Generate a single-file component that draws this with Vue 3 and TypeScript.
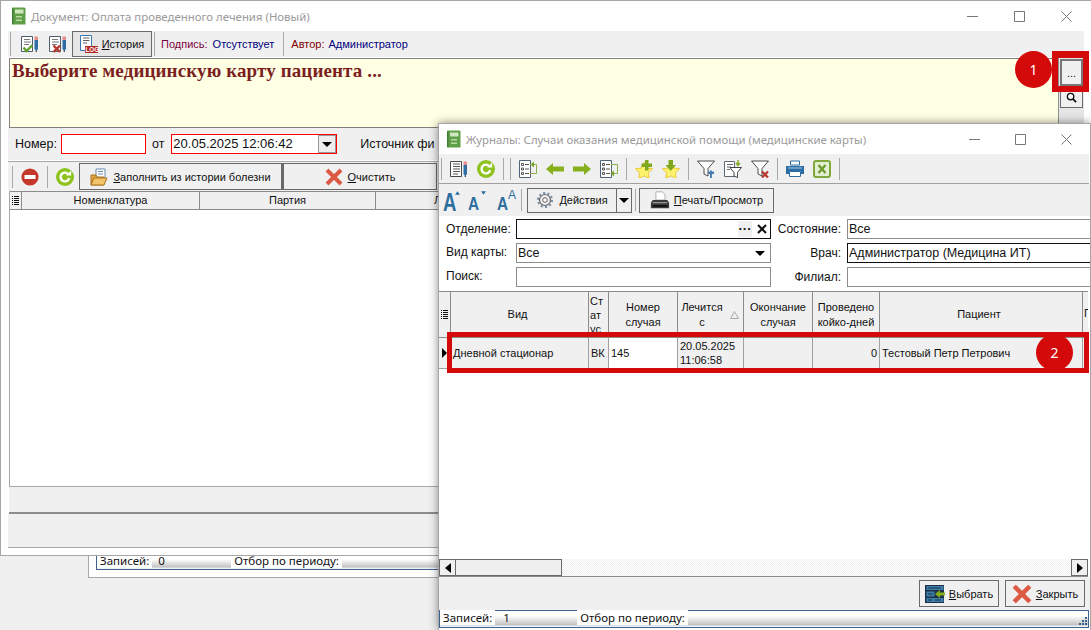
<template>
  <div class="desk">
    <!-- window lying behind the document, only its status bar shows -->
    <div class="back-win">
      <div class="status back-status">
        <span class="st-label">Записей:</span><span class="st-val st-v1">0</span>
        <span class="st-label">Отбор по периоду:</span>
      </div>
    </div>

    <!-- document window -->
    <section class="win doc-win">
      <header class="titlebar">
        <svg class="app-ico" viewBox="0 0 15 18" v-html="icons.app" />
        <span class="title">Документ: Оплата проведенного лечения (Новый)</span>
        <div class="controls">
          <svg viewBox="0 0 11 11"><path d="M0 5.5h11" /></svg>
          <svg viewBox="0 0 11 11"><path d="M.5.5h10v10H.5z" /></svg>
          <svg viewBox="0 0 11 11"><path d="M.5.5l10 10M10.5.5l-10 10" /></svg>
        </div>
      </header>

      <div class="tb1">
        <i class="sep" />
        <svg class="ico ml10" viewBox="0 0 18 18" v-html="icons.docOk" />
        <svg class="ico ml10" viewBox="0 0 18 18" v-html="icons.docNo" />
        <button class="btn hist"><svg class="ico" viewBox="0 0 18 18" v-html="icons.log" /><span><u>И</u>стория</span></button>
        <i class="sep" />
        <span class="info i-sign"><b class="c-purple">Подпись:</b><b class="c-navy">Отсутствует</b></span>
        <i class="sep" />
        <span class="info i-auth"><b class="c-maroon">Автор:</b><b class="c-navy">Администратор</b></span>
      </div>

      <div class="memo-row">
        <div class="memo">Выберите медицинскую карту пациента ...</div>
        <div class="memo-side">
          <button class="btn dots">...</button>
          <button class="btn lens"><svg viewBox="0 0 12 12" v-html="icons.lens" /></button>
        </div>
      </div>

      <div class="doc-form">
        <label>Номер:</label>
        <div class="req num" />
        <label class="ot">от</label>
        <div class="req date"><span>20.05.2025 12:06:42</span><i class="drop boxed" /></div>
        <label class="src">Источник фи</label>
      </div>

      <div class="tb2">
        <i class="sep" />
        <svg class="ico" viewBox="0 0 18 18" v-html="icons.stop" />
        <i class="sep" />
        <svg class="ico" viewBox="0 0 18 18" v-html="icons.refresh" />
        <button class="btn fill"><svg class="ico" viewBox="0 0 18 18" v-html="icons.folder" /><span><u>З</u>аполнить из истории болезни</span></button>
        <button class="btn clear"><svg class="ico" viewBox="0 0 18 18" v-html="icons.cross" /><span><u>О</u>чистить</span></button>
      </div>

      <div class="doc-grid">
        <div class="doc-head">
          <div class="hc ind"><svg viewBox="0 0 7 9" v-html="icons.rows" /></div>
          <div class="hc">Номенклатура</div>
          <div class="hc">Партия</div>
          <div class="hc last">Л</div>
        </div>
        <div class="doc-body" />
        <div class="doc-foot" />
      </div>
      <div class="doc-bottom" />
    </section>

    <!-- journal window -->
    <section class="win jour-win">
      <header class="titlebar">
        <svg class="app-ico" viewBox="0 0 15 18" v-html="icons.app" />
        <span class="title">Журналы: Случаи оказания медицинской помощи (медицинские карты)</span>
        <div class="controls">
          <svg viewBox="0 0 11 11"><path d="M0 5.5h11" /></svg>
          <svg viewBox="0 0 11 11"><path d="M.5.5h10v10H.5z" /></svg>
          <svg viewBox="0 0 11 11"><path d="M.5.5l10 10M10.5.5l-10 10" /></svg>
        </div>
      </header>

      <div class="jtb">
        <template v-for="(group, g) in toolbar" :key="g">
          <i class="sep" :class="{ dbl: group.length === 0 }" />
          <svg v-for="name in group" :key="name" class="ico" viewBox="0 0 18 18" v-html="icons[name]" />
        </template>
        <i class="sep" />
      </div>

      <div class="jtb2">
        <span class="font-a grow"><span class="g">A</span><svg viewBox="0 0 6 4"><path d="M0 4l3-4 3 4z" /></svg></span>
        <span class="font-a shrink"><span class="g">A</span><svg viewBox="0 0 6 4"><path d="M0 0l3 4 3-4z" /></svg></span>
        <span class="font-a both"><span class="g">A</span><em>A</em></span>
        <i class="sep" />
        <button class="btn act"><svg class="ico" viewBox="0 0 18 18" v-html="icons.gear" /><span><u>Д</u>ействия</span></button>
        <button class="btn act-drop"><i class="drop" /></button>
        <i class="sep s2" />
        <button class="btn print"><svg class="ico big" viewBox="0 0 22 20" v-html="icons.printerBlack" /><span><u>П</u>ечать/Просмотр</span></button>
      </div>

      <div class="filters">
        <label>Отделение:</label>
        <div class="field dark"><span class="pick">
          <b class="dots-mini">···</b>
          <svg viewBox="0 0 10 10"><path d="M1 1l8 8M9 1l-8 8" /></svg>
        </span></div>
        <label class="r">Состояние:</label>
        <div class="field wide">Все</div>

        <label class="up">Вид карты:</label>
        <div class="field">Все<i class="drop end" /></div>
        <label class="r">Врач:</label>
        <div class="field dark wide">Администратор (Медицина ИТ)</div>

        <label class="up">Поиск:</label>
        <div class="field" />
        <label class="r">Филиал:</label>
        <div class="field wide" />
      </div>

      <div class="grid-wrap">
        <div class="grid-row head">
          <div class="hc ind"><svg viewBox="0 0 7 9" v-html="icons.rows" /></div>
          <div v-for="c in columns" :key="c.title" class="hc" :class="c.cls">
            <span>{{ c.title }}</span>
            <svg v-if="c.sort" class="sort" viewBox="0 0 9 8"><path d="M4.5.5l4 7H.5z" /></svg>
          </div>
        </div>
        <div class="grid-row rec">
          <div class="cell ind"><i class="cur" /></div>
          <div class="cell">Дневной стационар</div>
          <div class="cell">ВК</div>
          <div class="cell on">145</div>
          <div class="cell">20.05.2025<br />11:06:58</div>
          <div class="cell" />
          <div class="cell num-r">0</div>
          <div class="cell">Тестовый Петр Петрович</div>
          <div class="cell" />
        </div>
        <div class="grid-body" />
        <div class="hscroll">
          <button class="sb-btn"><i class="tri-l" /></button>
          <div class="sb-thumb" />
          <div class="sb-track" />
          <button class="sb-btn"><i class="tri-r" /></button>
        </div>
      </div>

      <div class="jfoot">
        <button class="btn sel"><svg class="ico big" viewBox="0 0 20 20" v-html="icons.select" /><span><u>В</u>ыбрать</span></button>
        <button class="btn cls"><svg class="ico big" viewBox="0 0 18 18" v-html="icons.cross" /><span><u>З</u>акрыть</span></button>
      </div>

      <div class="status jour-status">
        <span class="st-label">Записей:</span><span class="st-val st-v2">1</span>
        <span class="st-label">Отбор по периоду:</span>
        <svg class="grip" viewBox="0 0 9 9"><path d="M7 0h2v2H7zM4 3h2v2H4zM7 3h2v2H7zM1 6h2v2H1zM4 6h2v2H4zM7 6h2v2H7z" /></svg>
      </div>
    </section>

    <!-- callouts laid over the screenshot -->
    <div class="mark mark-1" />
    <div class="mark mark-2" />
    <div class="badge badge-1">1</div>
    <div class="badge badge-2">2</div>
  </div>
</template>

<script setup lang="ts">
const pencil =
  '<path d="M13.5 5H17v9l-1.75 2-1.75-2z" fill="#2f6ea5"/><path d="M13.5 1.5H17V5h-3.5z" fill="#e9908c"/><path d="M14.7 15.5h1.1V17h-1.1z" fill="#222"/>'
const treeBox =
  '<path d="M.5.5h11v17H.5z" fill="#fff" stroke="#4f6478"/><path d="M2.5 3.5h2v2h-2zM2.5 8h2v2h-2zM2.5 12.5h2v2h-2z" fill="none" stroke="#555"/><path d="M6 4.5h4M6 9h4M6 13.5h4" stroke="#555"/>'
const star =
  '<path d="M9 2.5l2.6 5.500 6 .8-4.300 4.100 1.100 5.700L9 15.900l-5.400 2.700 1.100-5.700L.4 8.800l6-.8z" fill="#fff36e" stroke="#e8c837"/>'
const funnel = '<path d="M.5 1h17L11 8.500V16l-4-2V8.500z" fill="#fff" stroke="#4a4a4a"/>'

const icons: Record<string, string> = {
  app: '<path d="M1 1.500C1 .8 1.500.5 2 .5h11.500l1 1v16h-12C1.500 17.500 1 17 1 16z" fill="#5f9f47"/><path d="M1 2v14c0 1 .6 1.500 1.500 1.500V1z" fill="#3f7f33"/><path d="M4 2.500h8.500v4H4z" fill="#cfe6bf"/><path d="M5 9h6v1.500H5zM5 12.500h6V14H5z" fill="#b9d9a5"/>',
  docOk: `<path d="M.5 1.500h11v15H.5z" fill="#fff" stroke="#4f5d6b"/><path d="M3 4.500h6M3 7h7M3 9.500h5" stroke="#777"/>${pencil}<path d="M2.500 12.500l3 3.500 6-6" fill="none" stroke="#5da12e" stroke-width="2.400"/>`,
  docNo: `<path d="M.5 1.500h11v15H.5z" fill="#fff" stroke="#4f5d6b"/><path d="M3 4.500h6M3 7h7M3 9.500h5" stroke="#777"/>${pencil}<path d="M4.500 10.500l6.500 6.500M11 10.500L4.500 17" stroke="#b8352d" stroke-width="2.400"/>`,
  log: '<path d="M.5.500h11v15H.5z" fill="#fff" stroke="#3a78b5"/><path d="M3 3h6.500M3 5.500h6.500M3 8h4" stroke="#666"/><path d="M5 11h13v7H5z" fill="#b3261e"/><text x="5.500" y="17.200" font-size="6.300" font-weight="700" fill="#fff" font-family="Liberation Sans">LOG</text>',
  stop: '<circle cx="9" cy="9" r="8.600" fill="#c4382c"/><path d="M3.500 7h11v4h-11z" fill="#fff"/>',
  refresh: '<circle cx="9" cy="9" r="9" fill="#8dc21f"/><path d="M13.200 10.200A4.400 4.400 0 1 1 12 5.800" fill="none" stroke="#fff" stroke-width="2.400"/><path d="M10 7.600h5.200V2.600z" fill="#fff"/>',
  folder: '<path d="M6 1h9v10H6z" fill="#fff" stroke="#6a8bb0"/><path d="M8 3.500h5M8 6h5" stroke="#6a8bb0"/><path d="M1 7h5l1 2h7v8H1z" fill="#e2a23c" stroke="#a87420"/><path d="M1 17l3-7h13l-3 7z" fill="#f3c56a" stroke="#a87420"/>',
  cross: '<path d="M2 2l14 14M16 2L2 16" stroke="#dc5a43" stroke-width="4"/>',
  docPen: `<path d="M.5 1.500h11v15H.5z" fill="#fff" stroke="#4a4a4a"/><path d="M3 4h7M3 6.500h7M3 9h7M3 11.500h7M3 14h5" stroke="#555"/>${pencil}`,
  treeL: `${treeBox}<path d="M11 4.500h6.500v9H11" fill="none" stroke="#8db04a"/><path d="M15 1.500l-3.500 3 3.500 3z" fill="#7aa52c"/>`,
  arrowL: '<path d="M0 9l7-6v3.500h11v5H7V15z" fill="#86b01c"/>',
  arrowR: '<path d="M18 9l-7-6v3.500H0v5h11V15z" fill="#86b01c"/>',
  treeR: `${treeBox}<path d="M11 4.500h6.500v9H12" fill="none" stroke="#8db04a"/><path d="M14 10.500l-3.500 3 3.500 3z" fill="#7aa52c"/>`,
  starAdd: `${star}<path d="M6.500 3.500H10V0h3.500v3.500H17V7h-3.500v3.500H10V7H6.500z" fill="#7fa81e"/>`,
  starDown: `${star}<path d="M6.500 0H11v5h3l-5.250 6L3.500 5h3z" fill="#7fa81e"/>`,
  filter: `${funnel}<path d="M14 10.500V18M12 11.500V13h4v-1.500" fill="none" stroke="#3f7bb0" stroke-width="1.800"/>`,
  filterDoc: '<path d="M.5 1.500h10v15H.5z" fill="#fff" stroke="#5d6a76"/><path d="M3 4.500h6M3 7h4M3 9.500h3" stroke="#666"/><path d="M6 7.500h11.500l-4 5v5L10 16v-3.500z" fill="#fff" stroke="#444"/><path d="M14 0v4M12 3l2 2.500L16 3" fill="none" stroke="#7fa81e" stroke-width="1.400"/>',
  filterOff: `${funnel}<path d="M11 11.500l6 6M17 11.500l-6 6" stroke="#b8352d" stroke-width="2.200"/>`,
  printer: '<path d="M4.500 1h9v4h-9z" fill="#fff" stroke="#2b6ca3"/><path d="M0 6h18v8h-3v-3H3v3H0z" fill="#2b6ca3"/><path d="M3.500 11.500h11v5h-11z" fill="#fff" stroke="#2b6ca3"/><path d="M2 8h14" stroke="#a6cbe6"/>',
  excel: '<rect x="1" y="1" width="16" height="16" rx="2" fill="#e3efd2" stroke="#7fa83c" stroke-width="2"/><path d="M5.500 5l7 8M12.500 5l-7 8" stroke="#6d9a2c" stroke-width="2.400"/>',
  gear: '<circle cx="9" cy="9" r="5.500" fill="#eee" stroke="#666" stroke-width="1.200"/><circle cx="9" cy="9" r="2.300" fill="#fff" stroke="#666"/><circle cx="9" cy="9" r="7" fill="none" stroke="#7d8fa6" stroke-width="2" stroke-dasharray="2.200 2.200"/>',
  printerBlack: '<path d="M6.500 1h7l3 3v6h-10z" fill="#fff" stroke="#aaa"/><path d="M3 10h16l2 3v6H1v-6z" fill="#3a3a3a"/><path d="M3 13h16" stroke="#bbb"/><path d="M3 16.500h16" stroke="#111" stroke-width="2"/>',
  select: '<path d="M0 1h19v18H0z" fill="#1e2f4a"/><path d="M1.500 2h17v4h-17zM1.500 7.500h8v5h-8zM1.500 14h17v4h-17z" fill="#3d7fa8"/><path d="M3 4h13M3 10h5M3 16h4M10 16h6" stroke="#16354f"/><path d="M10 10l5-4v2.500h5v3h-5V14z" fill="#86b01c"/>',
  lens: '<circle cx="5" cy="5" r="3.500" fill="#fff" stroke="#111" stroke-width="1.500"/><path d="M7.500 7.500l3.500 3.500" stroke="#111" stroke-width="2"/>',
  rows: '<path d="M0 0h1v1H0zM2 0h5v1H2zM0 2h1v1H0zM2 2h5v1H2zM0 4h1v1H0zM2 4h5v1H2zM0 6h1v1H0zM2 6h5v1H2zM0 8h1v1H0zM2 8h5v1H2z" fill="#111"/>',
}

const toolbar: string[][] = [
  ['docPen', 'refresh'],
  [],
  ['treeL', 'arrowL', 'arrowR', 'treeR'],
  ['starAdd', 'starDown'],
  ['filter', 'filterDoc', 'filterOff'],
  ['printer', 'excel'],
]

const columns: { title: string; cls?: string; sort?: boolean }[] = [
  { title: 'Вид', cls: 'left-2' },
  { title: 'Статус', cls: 'narrow' },
  { title: 'Номер случая' },
  { title: 'Лечится с', cls: 'sorted', sort: true },
  { title: 'Окончание случая' },
  { title: 'Проведено койко-дней' },
  { title: 'Пациент', cls: 'left-2' },
  { title: 'П', cls: 'clip' },
]
</script>

<style>
html, body { margin: 0; background: #f0f0f0; overflow: hidden; }
</style>

<style scoped>
.desk {
  position: relative;
  width: 1091px; height: 630px;
  overflow: hidden;
  background: #f0f0f0;
  font: 11px "Liberation Sans", Tahoma, sans-serif;
  color: #111;
}
button { font: inherit; color: inherit; padding: 0; margin: 0; }
u { text-underline-offset: 1px; }
.win {
  position: absolute;
  box-sizing: border-box;
  display: flex; flex-direction: column;
  background: #fff;
  border-top: 1px solid #a6a6a6;
  border-left: 1px solid #a6a6a6;
  overflow: hidden;
}
.doc-win { left: 0; top: 0; width: 1091px; height: 556px; border-bottom: 1px solid #a6a6a6; }
.jour-win {
  left: 438px; top: 123px; width: 653px; height: 507px;
  border-right: 1px solid #a6a6a6;
  box-shadow: 0 0 9px rgba(0, 0, 0, .45);
}
.titlebar { flex: none; height: 30px; display: flex; align-items: center; padding-left: 10px; }
.app-ico { width: 15px; height: 18px; margin-right: 5px; flex: none; }
.title { font: 11.4px "Noto Sans", sans-serif; color: #9a9a9a; margin-top: 1px; }
.jour-win .app-ico { margin: 0 5px 0 -3px; }
.controls { margin-left: auto; display: flex; gap: 36px; padding-right: 19px; }
.controls svg { width: 11px; height: 11px; fill: none; stroke: #777; stroke-width: 1; }
.jour-win .controls { gap: 35px; padding-right: 18px; }
.sep { flex: none; width: 1px; height: 24px; background: #a8a8a8; }
.ico { width: 18px; height: 18px; flex: none; display: block; }
.ico.big { width: 20px; height: 20px; }
.btn {
  box-sizing: border-box;
  display: flex; align-items: center; justify-content: center; gap: 5px;
  background: #f0f0f0;
  border: 1px solid #6a6a6a;
  white-space: nowrap;
}

/* document window */
.tb1 {
  flex: none; height: 26px; margin: 0 7px;
  display: flex; align-items: center;
  background: #f0f0f0;
}
.tb1 .sep:first-child { margin-left: 2px; }
.ml10 { margin-left: 10px; }
.hist { width: 80px; height: 26px; margin: 0 2px 0 5px; background: #e6e6e6; gap: 4px; }
.info { display: flex; gap: 4px; padding: 0 4px 0 6px; font-size: 11px; }
.info.i-sign { gap: 5px; padding-right: 9px; }
.info.i-auth { padding-left: 7px; }
.info b { font-weight: 400; }
.c-purple { color: #800040; }
.c-maroon { color: #800000; }
.c-navy { color: #000080; }
.memo-row { flex: none; height: 70px; margin: 1px 7px 0 8px; display: flex; }
.memo {
  flex: 1;
  box-sizing: border-box;
  background: #ffffe3;
  border: 1px solid #808080;
  border-right: 0;
  padding: 1px 2px;
  font: 700 19px "Liberation Serif", serif;
  letter-spacing: .12px;
  color: #7b1e1e;
}
.memo-side {
  flex: none; width: 26px;
  display: flex; flex-direction: column; align-items: center;
  background: #e6e6e6;
  border-left: 1px solid #909090;
  box-sizing: border-box;
}
.dots { width: 23px; height: 27px; margin-top: 1px; border: 2px solid #777; }
.lens { width: 23px; height: 22px; }
.lens svg { width: 11px; height: 11px; }
.doc-form {
  flex: none; height: 32px; margin: 0 7px;
  display: flex; align-items: center;
  background: #f0f0f0;
  font-size: 12.5px;
}
.doc-form label { margin-left: 7px; }
.req { box-sizing: border-box; height: 20px; background: #fff; border: 1px solid #f00; margin-top: -1px; }
.num { width: 85px; margin-left: 4px; }
.doc-form .ot { margin-left: 6px; }
.date {
  width: 166px; margin-left: 7px;
  display: flex; align-items: center; justify-content: space-between;
  padding-left: 1px;
  font-size: 13px;
}
.doc-form .src { margin-left: 23px; white-space: nowrap; flex: none; }
.drop {
  display: block; width: 0; height: 0;
  border: 5px solid transparent; border-top: 5px solid #000; border-bottom: 0;
}
.drop.boxed {
  box-sizing: content-box;
  width: 16px; height: 16px;
  border: 1px solid #999;
  background: #eee;
  position: relative;
}
.drop.boxed::after {
  content: ""; position: absolute; left: 3px; top: 6px;
  border: 5px solid transparent; border-top: 5px solid #000; border-bottom: 0;
}
.tb2 {
  flex: none; height: 30px; margin: 1px 7px 0;
  display: flex; align-items: center; gap: 8px;
  background: #f0f0f0;
  border-top: 1px solid #a8a8a8;
  box-sizing: border-box;
  padding-left: 4px;
}
.tb2 .sep { height: 22px; }
.tb2 .fill { width: 204px; height: 27px; margin-left: -3px; border-width: 1px 2px 1px 1px; }
.tb2 .clear { width: 154px; height: 27px; margin-left: -8px; }
.doc-grid {
  flex: 1; margin: 0 7px 0 8px;
  display: flex; flex-direction: column;
  border-left: 1px solid #a8a8a8;
  min-height: 0;
}
.doc-head {
  flex: none; height: 19px;
  display: grid; grid-template-columns: 12px 178px 176px 62px;
  background: #f0f0f0;
  border-top: 1px solid #8c8c8c;
  border-bottom: 1px solid #8c8c8c;
  box-sizing: border-box;
}
.hc {
  display: flex; align-items: center; justify-content: center;
  text-align: center;
  line-height: 15px;
  border-right: 1px solid #8c8c8c;
  overflow: hidden;
}
.hc.ind svg { width: 7px; height: 9px; }
.hc.last { justify-content: flex-start; padding-left: 58px; border-right: 0; white-space: nowrap; }
.doc-body { flex: 1; background: #fff; }
.doc-foot {
  flex: none; height: 28px; box-sizing: border-box;
  background: #f0f0f0;
  border-top: 1px solid #a8a8a8; border-bottom: 2px solid #8c8c8c;
  margin-left: -1px;
}
.doc-bottom { flex: none; height: 33px; margin: 0 7px 7px; background: #f0f0f0; border-bottom: 1px solid #a8a8a8; }

/* status bars */
.status {
  box-sizing: border-box;
  display: flex; align-items: center;
  background: linear-gradient(#fff 30%, #c4c4c4 85%, #fff);
  border: 1px solid #3f6390;
  border-top: 0;
  position: relative;
  white-space: nowrap;
  font: 11.5px "Noto Sans", sans-serif;
  padding-bottom: 3px;
}
.st-label { background: #fff; padding: 0 3px; }
.st-val { padding: 0 0 0 6px; }
.st-v1 { width: 73px; }
.back-win {
  position: absolute; left: 88px; top: 540px; width: 400px; height: 38px;
  background: #fff; border: 1px solid #a8a8a8; box-sizing: border-box;
  padding: 0 0 7px 7px; display: flex; align-items: flex-end;
}
.back-status { width: 100%; height: 15px; }

/* journal window */
.jtb {
  flex: none; height: 30px; margin-right: 1px;
  display: flex; align-items: center; gap: 9px;
  background: #f0f0f0;
  border-bottom: 1px solid #a0a0a0;
  padding-left: 3px;
  box-sizing: border-box;
}
.jtb .sep { height: 22px; margin: 0 -1px; }
.jtb .sep.dbl { margin-right: -2px; }
.jtb2 { flex: none; height: 32px; display: flex; align-items: center; background: #f0f0f0; padding-left: 4px; }
.jtb2 .sep { height: 22px; margin: 0 5px 0 0; }
.jtb2 .sep.s2 { margin: 0 3px; }
.font-a {
  position: relative;
  display: block; flex: none; height: 26px;
  font: 700 25px/26px "Liberation Sans", sans-serif; color: #2f6f9f;
}
.font-a .g { display: block; transform: scaleX(.74); transform-origin: left; }
.font-a svg { position: absolute; fill: #2f6f9f; }
.grow { width: 25px; margin-top: 4px; }
.grow svg { left: 12px; top: 2px; width: 5px; height: 4px; }
.shrink { width: 29px; margin-top: 8px; font-size: 18px; }
.shrink .g, .both .g { transform: scaleX(.85); }
.shrink svg { left: 13px; top: 0; width: 5px; height: 4px; }
.both { width: 24px; margin-top: 8px; font-size: 18px; }
.both em { position: absolute; left: 11px; top: -9px; font-style: normal; font-size: 12px; font-weight: 400; }
.act { width: 90px; height: 25px; }
.act-drop { width: 15px; height: 25px; border-left: 0; }
.print { width: 135px; height: 25px; gap: 4px; }
.filters {
  flex: none; height: 76px;
  box-sizing: border-box;
  padding: 3px 0 0 7px;
  display: grid;
  grid-template-columns: 70px 255px 76px 1fr;
  grid-template-rows: 20px 20px 20px;
  row-gap: 4px;
  align-items: center;
  margin-right: -20px;
  font-size: 12px;
}
.filters .up { margin-top: -3px; }
.filters .r { text-align: right; padding-right: 6px; }
.field {
  box-sizing: border-box; height: 20px;
  display: flex; align-items: center;
  background: #fff;
  border: 1px solid #8c8c8c;
  padding-left: 1px;
  font-size: 12.5px;
}
.field.dark { border-color: #111; }
.pick { margin-left: auto; display: flex; align-items: center; gap: 3px; padding-right: 1px; }
.dots-mini { width: 14px; height: 16px; background: #f0f0f0; text-align: center; line-height: 15px; font-size: 13px; }
.pick svg { width: 10px; height: 10px; margin: 0 2px; fill: none; stroke: #111; stroke-width: 2; }
.drop.end { margin-left: auto; margin-right: 5px; }
.grid-wrap {
  flex: 1; min-height: 0;
  display: flex; flex-direction: column;
  margin: -1px 2px 0 0;
  border-top: 1px solid #8c8c8c; border-bottom: 1px solid #8c8c8c;
}
.grid-row { flex: none; display: grid; grid-template-columns: 12px 138px 20px 69px 66px 69px 67px 203px 1fr; }
.head { height: 46px; background: #f0f0f0; border-bottom: 1px solid #8c8c8c; box-sizing: border-box; }
.head .hc { padding: 0 1px; }
.head .hc.left-2 { padding-right: 5px; }
.head .narrow { justify-content: flex-start; }
.head .narrow span { width: 14px; word-break: break-all; line-height: 14px; text-align: left; }
.head .sorted { justify-content: flex-start; padding-left: 2px; }
.head .sorted span { width: 44px; text-align: center; }
.sort { width: 9px; height: 8px; margin-left: 6px; fill: none; stroke: #aaa; }
.head .clip { justify-content: flex-start; align-items: flex-start; padding-top: 14px; border-right: 0; }
.rec { height: 31px; background: #f0f0f0; border-bottom: 1px solid #a0a0a0; box-sizing: border-box; }
.cell {
  display: flex; align-items: center;
  padding: 0 2px 1px;
  line-height: 14px;
  border-right: 1px solid #a0a0a0;
  white-space: nowrap;
  overflow: hidden;
}
.cell.on { background: #fff; }
.num-r { justify-content: flex-end; }
.cell.ind { padding: 0; justify-content: center; }
.cur { display: block; border: 5px solid transparent; border-left: 5px solid #000; border-right: 0; }
.grid-body { flex: 1; background: #fff; }
.hscroll { flex: none; height: 17px; display: flex; background: #fff; }
.sb-btn {
  box-sizing: border-box; width: 17px; height: 17px;
  display: flex; align-items: center; justify-content: center;
  background: #f0f0f0; border: 1px solid #6a6a6a;
}
.tri-l { border: 5px solid transparent; border-right: 6px solid #000; border-left: 0; }
.tri-r { border: 5px solid transparent; border-left: 6px solid #000; border-right: 0; }
.sb-thumb { box-sizing: border-box; width: 106px; background: #f0f0f0; border: 1px solid #6a6a6a; border-left: 0; }
.sb-track {
  flex: 1;
  background: repeating-conic-gradient(#f0f0f0 0 25%, #fff 0 50%) 0 0/2px 2px;
}
.jfoot {
  flex: none; height: 33px;
  display: flex; justify-content: flex-end; align-items: center; gap: 6px;
  padding-right: 5px;
  background: #f0f0f0;
}
.jfoot .btn { width: 80px; height: 27px; gap: 4px; }
.jour-status { flex: none; height: 18px; border-top: 1px solid #3f6390; margin: 0 1px 2px 0; padding-left: 0; }
.jour-status .st-val.st-v2 { padding-left: 8px; width: 74px; }
.grip { position: absolute; right: 1px; bottom: 1px; width: 9px; height: 9px; fill: #34608e; }

/* callouts */
.mark { position: absolute; box-sizing: border-box; border-style: solid; border-color: #d40a0a; }
.mark-1 { left: 1052px; top: 51px; width: 37px; height: 41px; border-width: 7px 6px 6px 6px; }
.mark-2 { left: 447px; top: 332px; width: 642px; height: 41px; border-width: 5px; }
.badge {
  position: absolute;
  width: 37px; height: 37px; border-radius: 50%;
  background: #d40a0a; color: #fff;
  display: flex; align-items: center; justify-content: center;
  font: 14px "Noto Sans", sans-serif;
}
.badge-1 { left: 1015px; top: 51px; }
.badge-2 { left: 1036px; top: 334px; }
</style>
